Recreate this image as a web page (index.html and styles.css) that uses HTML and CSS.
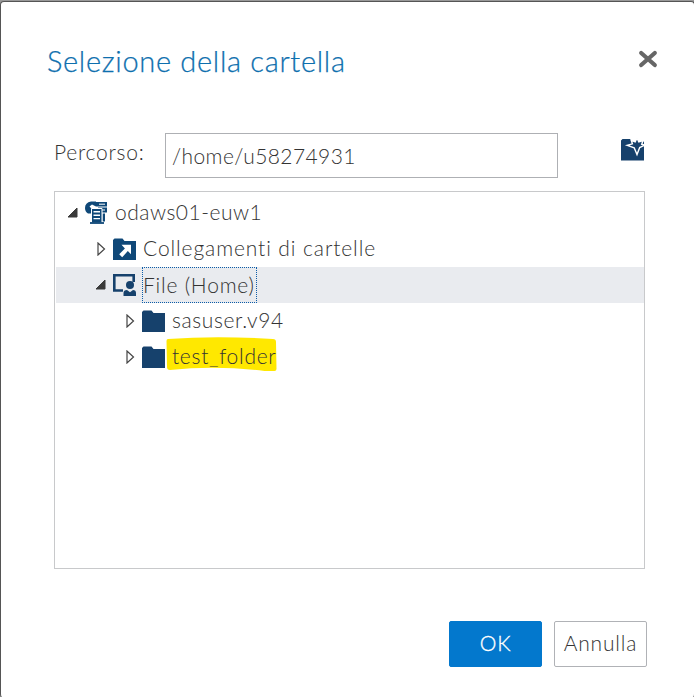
FILE: index.html
```html
<!DOCTYPE html>
<html lang="it">
<head>
<meta charset="utf-8">
<title>Selezione della cartella</title>
<link rel="stylesheet" href="styles.css">
</head>
<body>
<main class="dialog">
  <header class="head">
    <h1 class="title">Selezione della cartella</h1>
    <svg class="close" width="20" height="18" viewBox="0 0 20 18"><path d="M3.2 3L16.8 15M16.8 3L3.2 15" stroke="#666" stroke-width="4.2" stroke-linecap="round"/></svg>
  </header>
  <div class="path-row">
    <label class="label" for="path">Percorso:</label>
    <input class="path" id="path" value="/home/u58274931">
    <svg class="new-folder" width="24" height="24" viewBox="0 0 24 24">
      <path d="M0 22.500V2.500L1.500 1h8L11 3.500h12v19z" fill="#16416c"/>
      <path d="M16 0l1.800 3.800 4.200-1.300-1.300 3.700 3 1-5 2.300-2.700 7-2.800-6.700-7-2.500 5.200-1.500-1.200-3.500 4 1.500z" fill="#16416c" stroke="#fff" stroke-width="1.400"/>
    </svg>
  </div>
  <ul class="tree">
    <li class="row l1">
      <svg class="arrow" width="12" height="12" viewBox="0 0 12 12"><path d="M10 1v9H1z" fill="#3a3a3a" stroke="#3a3a3a"/></svg>
      <svg class="icon" width="24" height="24" viewBox="0 0 24 24">
        <path d="M11 .5H6Q0 1.500 0 7q0 3.500 3 5.500h4V8L4.500 5.500 7 3.500l4 2z" fill="#0f4878"/>
        <path d="M11 1h11v4.500H11zM13 6.500h9v5h-9zM17.500 12.500H20v8h-2.500z" fill="#0f4878"/>
        <path d="M14 3.200h6M14 9h6" stroke="#fff"/>
        <path d="M6.500 7.500h10.500V22H6.500z" fill="#0f4878" stroke="#fff"/>
        <path d="M8.500 10.800h6.500M8.500 14.200h6.500M8.500 17.600h6.500" stroke="#fff" stroke-width="1.400"/>
        <path d="M5 22h14" stroke="#0f4878" stroke-width="1.800"/>
      </svg>
      <span class="name server">odaws01-euw1</span>
    </li>
    <li class="row l2">
      <svg class="arrow" width="12" height="14" viewBox="0 0 12 14"><path d="M3 1v12l6.500-6z" fill="#fff" stroke="#444" stroke-width="1.200"/></svg>
      <svg class="icon" width="24" height="24" viewBox="0 0 24 24">
        <path d="M0 23V3l1.500-1.500h8L11.500 4H23v19z" fill="#0f4878"/>
        <path d="M8.500 7.800H18v9.500l-3.200-3.200-5.600 6.200-3-3 5.700-5.900z" fill="#fff"/>
      </svg>
      <span class="name links">Collegamenti di cartelle</span>
    </li>
    <li class="row l2 selected">
      <svg class="arrow" width="12" height="12" viewBox="0 0 12 12"><path d="M10 1v9H1z" fill="#3a3a3a" stroke="#3a3a3a"/></svg>
      <svg class="icon" width="24" height="24" viewBox="0 0 24 24">
        <path d="M10 17.500H1.300V2.200h19.400V9" fill="none" stroke="#16416c" stroke-width="2.600"/>
        <circle cx="17" cy="12" r="4" fill="#16416c"/>
        <path d="M10.500 23v-3q0-3 3.500-3l3 2.200 3-2.200q3 0 3 3v3z" fill="#16416c"/>
      </svg>
      <span class="name home">File (Home)</span>
    </li>
    <li class="row l3">
      <svg class="arrow" width="12" height="14" viewBox="0 0 12 14"><path d="M3 1v12l6.500-6z" fill="#fff" stroke="#444" stroke-width="1.200"/></svg>
      <svg class="icon" width="24" height="24" viewBox="0 0 24 24"><path d="M0 23V3l1.500-1.500h8L11.500 4H23v19z" fill="#16416c"/></svg>
      <span class="name sasuser">sasuser.v94</span>
    </li>
    <li class="row l3">
      <svg class="arrow" width="12" height="14" viewBox="0 0 12 14"><path d="M3 1v12l6.500-6z" fill="#fff" stroke="#444" stroke-width="1.200"/></svg>
      <svg class="icon" width="24" height="24" viewBox="0 0 24 24"><path d="M0 23V3l1.500-1.500h8L11.500 4H23v19z" fill="#16416c"/></svg>
      <span class="name test">
        <svg class="marker" width="112" height="36" viewBox="0 0 112 36"><path d="M2 2Q50-1.500 107 2q3 0 3 3l.5 27q0 2-2 2l-10 0Q50 28 4 33q-3 0-3-3L.5 4q0-2 1.500-2z" fill="#ffe800"/></svg>
        <span class="marked">test_folder</span>
      </span>
    </li>
  </ul>
  <footer class="actions">
    <button class="btn ok">OK</button>
    <button class="btn cancel">Annulla</button>
  </footer>
</main>
</body>
</html>
```
FILE: styles.css
```css
* { box-sizing: border-box; }
body {
  margin: 0;
  height: 697px;
  overflow: hidden;
  background: #999;
  font: 300 21px/36px Lato, "Open Sans", sans-serif;
  color: #333;
}
.dialog {
  display: flex;
  flex-direction: column;
  width: 695px;
  height: 697px;
  margin-top: 1px;
  padding: 0 49px 0 53px;
  border: 1px solid #555;
  border-bottom: 0;
  border-radius: 4px;
  background: #fff;
}
.head {
  display: flex;
  justify-content: space-between;
  height: 131px;
  margin: 0 -14px 0 -7px;
  padding-top: 41px;
}
.title {
  margin: 0;
  font-size: 29px;
  font-weight: 300;
  line-height: 36px;
  letter-spacing: .69px;
  color: #0e6fae;
  -webkit-text-stroke: .25px #0e6fae;
}
.close { margin-top: 7px; margin-right: 1px; }
.path-row { display: flex; height: 45px; }
.label { flex: none; width: 111px; padding-top: 1px; letter-spacing: .75px; }
.path {
  flex: none;
  width: 393px;
  height: 45px;
  padding: 0 7px 1px 6px;
  border: 1px solid #aeb0b4;
  font: inherit;
  letter-spacing: .4px;
  color: #333;
}
.new-folder { flex: none; margin: 5px 0 0 63px; }
.tree {
  width: 591px;
  height: 378px;
  margin: 13px 0 0;
  padding: 3px 0 0 1px;
  border: 1px solid #c8c9cb;
  list-style: none;
}
.row { display: flex; align-items: center; height: 36px; }
.l1 { padding-left: 11px; }
.l2 { padding-left: 39px; }
.l3 { padding-left: 68px; }
.selected { background: #e9ebef; }
.arrow { flex: none; margin-right: 6px; }
.icon { flex: none; margin-right: 5px; }
.name { position: relative; height: 36px; padding: 0 1px; line-height: 34px; white-space: nowrap; }
.server { letter-spacing: .5px; }
.links { letter-spacing: .9px; }
.home { padding-right: 2px; letter-spacing: .78px; line-height: 36px; outline: 1px dotted #0c5ca8; outline-offset: -1px; }
.sasuser { letter-spacing: .6px; }
.test { letter-spacing: .7px; }
.marker { position: absolute; left: -5px; top: -2px; }
.marked { position: relative; }
.actions {
  display: flex;
  gap: 12px;
  margin: 52px 0 0 395px;
}
.btn {
  flex: none;
  width: 93px;
  height: 46px;
  padding: 0 0 2px;
  border: 1px solid #b0b2b6;
  border-radius: 2px;
  background: #fff;
  font: inherit;
  letter-spacing: .85px;
  color: #333;
}
.ok {
  border-color: #0378cd;
  background: #0378cd;
  color: #fff;
  -webkit-text-stroke: .3px #fff;
}
```
